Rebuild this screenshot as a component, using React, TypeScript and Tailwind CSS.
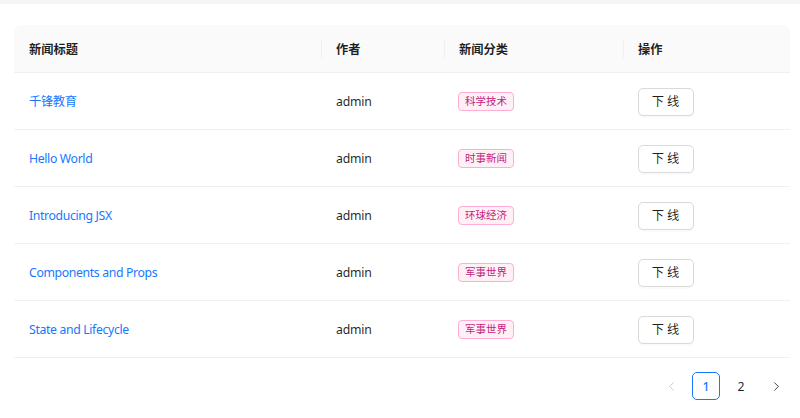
import { ChevronLeft, ChevronRight } from 'lucide-react';

type NewsRow = {
  title: string;
  author: string;
  category: string;
};

const rows: NewsRow[] = [
  { title: '千锋教育', author: 'admin', category: '科学技术' },
  { title: 'Hello World', author: 'admin', category: '时事新闻' },
  { title: 'Introducing JSX', author: 'admin', category: '环球经济' },
  { title: 'Components and Props', author: 'admin', category: '军事世界' },
  { title: 'State and Lifecycle', author: 'admin', category: '军事世界' },
];

const cols = 'grid grid-cols-[307px_123px_179px_167px]';

const HeadCell = ({ label, divider }: { label: string; divider?: boolean }) => (
  <div className="relative flex items-center pl-[15px] pr-[13px] pt-px font-semibold text-[rgba(0,0,0,0.88)]">
    {divider && (
      <span className="absolute left-0 top-1/2 h-[19px] w-px -translate-y-1/2 bg-[#f0f0f0]" />
    )}
    {label}
  </div>
);

export default function App() {
  return (
    <div
      className="min-h-[418px] bg-white text-[12.25px] leading-[19px] text-[rgba(0,0,0,0.88)]"
      style={{ fontFamily: '"Segoe UI", "Noto Sans", "Noto Sans CJK SC", sans-serif' }}>
      <div className="h-[4px] bg-[#f5f5f5]" />
      <div className="pl-[14px] pr-[10px] pt-[21px]">
        <div className={`${cols} h-[48px] rounded-t-[7px] border-b border-[#f0f0f0] bg-[#fafafa]`}>
          <HeadCell label="新闻标题" />
          <HeadCell label="作者" divider />
          <HeadCell label="新闻分类" divider />
          <HeadCell label="操作" divider />
        </div>
        {rows.map((row, i) => (
          <div key={i} className={`${cols} h-[57px] border-b border-[#f0f0f0] pt-px`}>
            <div className="flex items-center pl-[15px] pr-[13px]">
              <a className="cursor-pointer tracking-[-0.35px] text-[#1677ff]">{row.title}</a>
            </div>
            <div className="flex items-center pl-[15px] pr-[13px] tracking-[-0.2px]">{row.author}</div>
            <div className="flex items-center px-[14px]">
              <span className="rounded-[4px] border border-[#ffadd2] bg-[#fff0f6] px-[6px] text-[10.5px] leading-[17px] text-[#c41d7f]">
                {row.category}
              </span>
            </div>
            <div className="flex items-center pl-[15px] pr-[13px]">
              <button className="h-[28px] w-[56px] rounded-[5px] border border-[#d9d9d9] bg-white pl-[2px] tracking-[3px] shadow-[0_2px_0_rgba(0,0,0,0.02)]">
                下线
              </button>
            </div>
          </div>
        ))}
        <div className="mt-[14px] flex items-center justify-end gap-[7px]">
          <span className="flex h-[28px] w-[28px] items-center justify-center text-[rgba(0,0,0,0.25)]">
            <ChevronLeft size={15} strokeWidth={1.3} />
          </span>
          <span className="flex h-[28px] w-[28px] items-center justify-center rounded-[5px] border border-[#1677ff] font-medium text-[#1677ff]">
            1
          </span>
          <span className="flex h-[28px] w-[28px] items-center justify-center">2</span>
          <span className="flex h-[28px] w-[28px] items-center justify-center">
            <ChevronRight size={15} strokeWidth={1.3} />
          </span>
        </div>
      </div>
    </div>
  );
}
